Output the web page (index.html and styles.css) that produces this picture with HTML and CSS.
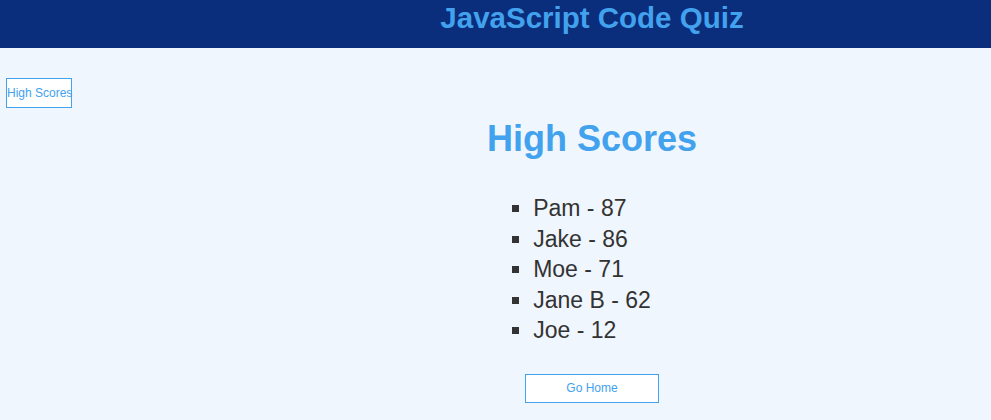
FILE: index.html
```html
<!DOCTYPE html>
<html>
<head>
<meta charset="utf-8">
<title>JavaScript Code Quiz</title>
<link rel="stylesheet" href="styles.css">
</head>
<body>
<header class="topbar">
  <h1 class="app-title">JavaScript Code Quiz</h1>
</header>
<div class="layout">
  <aside class="sidebar">
    <button class="btn btn-scores">High Scores</button>
  </aside>
  <main class="main">
    <h2 class="page-title">High Scores</h2>
    <ul class="score-list">
      <li>Pam - 87</li>
      <li>Jake - 86</li>
      <li>Moe - 71</li>
      <li>Jane B - 62</li>
      <li>Joe - 12</li>
    </ul>
    <button class="btn btn-home">Go Home</button>
  </main>
</div>
</body>
</html>
```
FILE: styles.css
```css
html, body {
  margin: 0;
  padding: 0;
}
body {
  background: #f0f6fd;
  font-family: "Liberation Sans", Arial, sans-serif;
  color: #333;
  height: 420px;
  overflow: hidden;
}
.topbar {
  background: #0b2e7c;
  height: 48px;
  padding-left: 193px;
  box-sizing: border-box;
  text-align: center;
}
.app-title {
  margin: 0;
  padding-top: 1px;
  font-size: 29.5px;
  line-height: 34px;
  font-weight: bold;
  color: #42a2ee;
}
.layout {
  display: grid;
  grid-template-columns: 193px 1fr;
}
.sidebar {
  padding: 30px 0 0 6px;
}
.btn {
  background: #fff;
  border: 1px solid #42a2ee;
  color: #42a2ee;
  font-family: "Liberation Sans", Arial, sans-serif;
  font-size: 12px;
  padding: 0;
  box-sizing: border-box;
  white-space: nowrap;
  cursor: pointer;
}
.btn-scores {
  width: 66px;
  height: 30px;
}
.main {
  display: flex;
  flex-direction: column;
  align-items: center;
  padding-top: 70px;
}
.page-title {
  margin: 0;
  font-size: 36px;
  font-weight: bold;
  color: #42a2ee;
  line-height: 41px;
}
.score-list {
  margin: 34px 0 0 0;
  padding: 0;
  list-style: square;
  font-size: 23px;
  line-height: 30.5px;
  color: #333;
  text-align: left;
}
.btn-home {
  margin-top: 28px;
  width: 134px;
  height: 29px;
}
```
